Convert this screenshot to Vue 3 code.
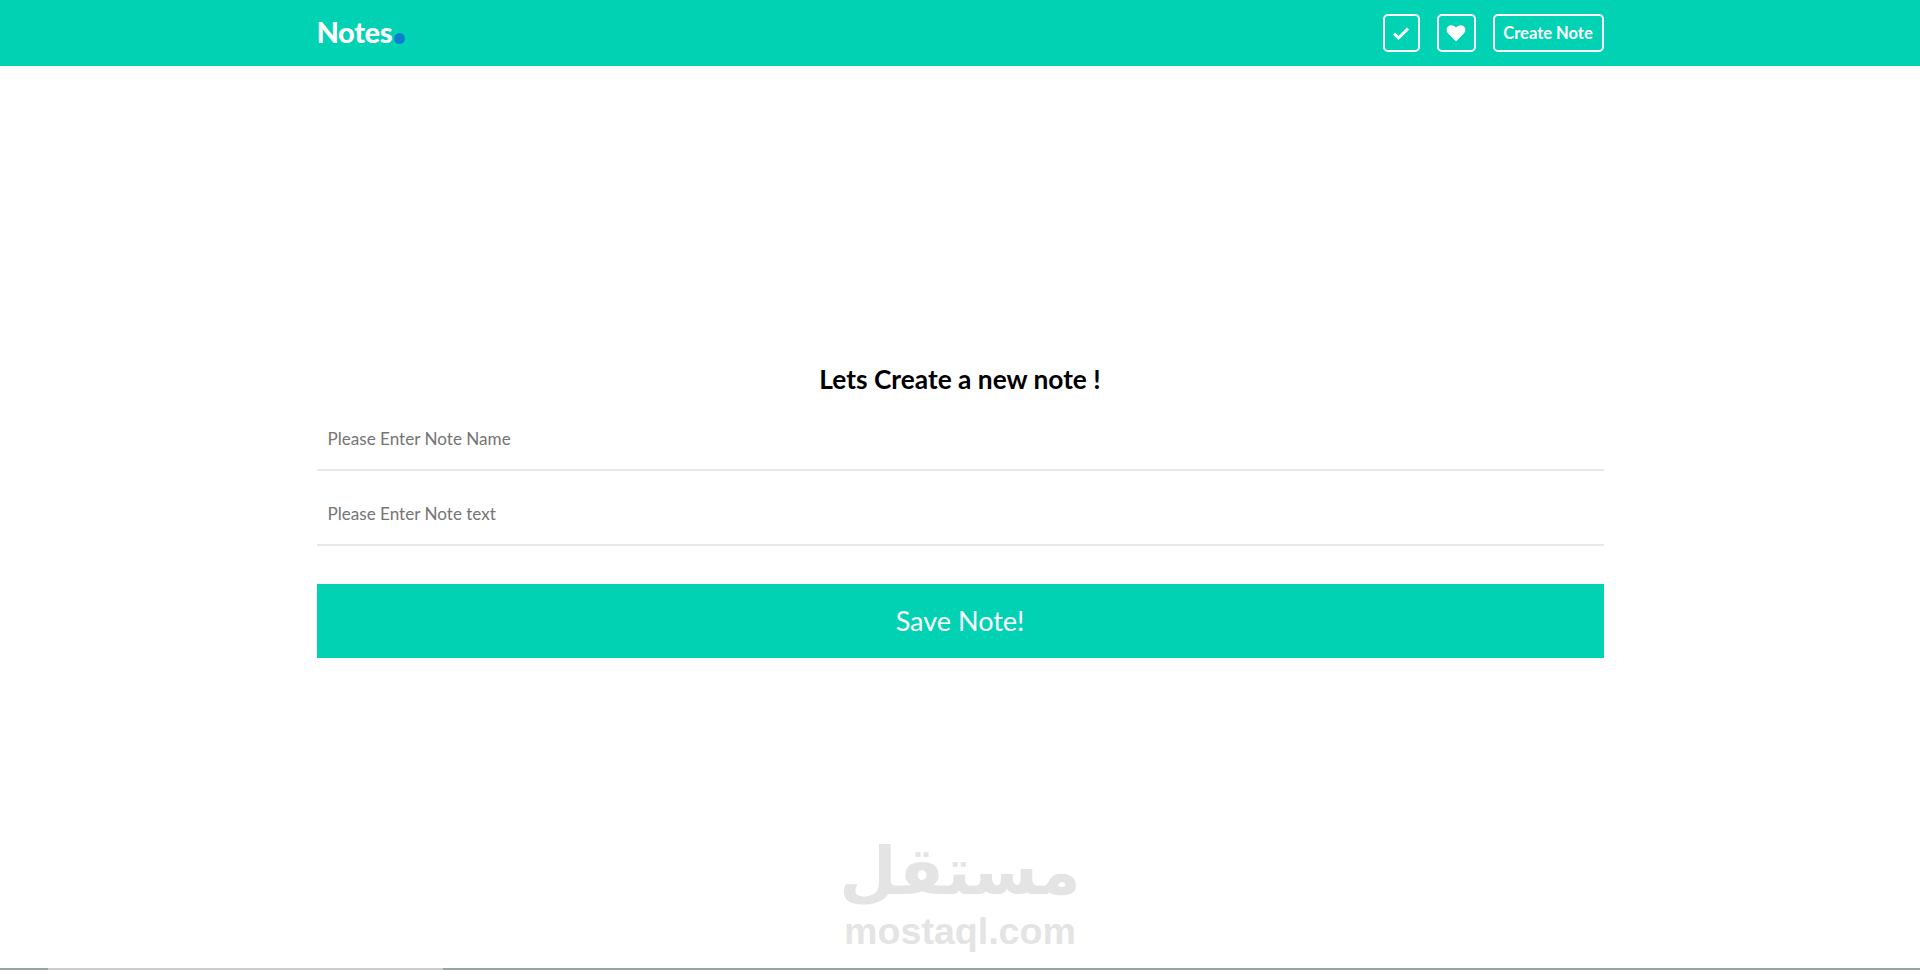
<script setup>
const title = 'Notes'
</script>

<template>
  <div class="page">
    <header class="bar">
      <div class="wrap bar-in">
        <div class="logo">{{ title }}<span class="dot"></span></div>
        <nav class="nav">
          <a class="btn icon check">
            <svg width="18" height="16" viewBox="0 0 18 16"><path d="M2 8.5 6.5 13 16 3.5" fill="none" stroke="#fff" stroke-width="3"/></svg>
          </a>
          <a class="btn icon heart">
            <svg width="20" height="18" viewBox="0 0 20 18"><path d="M10 17.5 2.2 9.6C0 7.2 .2 3.6 2.6 2 4.8.5 7.8 1 10 3.4 12.2 1 15.2.5 17.4 2c2.4 1.6 2.6 5.2.4 7.6Z" fill="#fff"/></svg>
          </a>
          <a class="btn create">Create Note</a>
        </nav>
      </div>
    </header>
    <main class="wrap form">
      <h1 class="heading">Lets Create a new note !</h1>
      <input class="field" placeholder="Please Enter Note Name" />
      <input class="field second" placeholder="Please Enter Note text" />
      <button class="save">Save Note!</button>
    </main>
    <div class="mark">
      <div class="mark-ar" lang="ar" dir="rtl">مستقل</div>
      <div class="mark-en">mostaql.com</div>
    </div>
    <div class="edge"></div>
  </div>
</template>

<style scoped>
.page { position: relative; height: 970px; overflow: hidden; background: #fff; font-family: "Lato", "Open Sans", sans-serif; }
.wrap { width: 1287px; margin: 0 auto; }
.bar { height: 66px; background: #01d2b4; }
.bar-in { height: 100%; display: flex; align-items: center; justify-content: space-between; }
.logo { display: flex; align-items: baseline; margin-top: -3px; color: #fff; font-size: 29px; font-weight: 900; letter-spacing: -0.4px; }
.dot { width: 11px; height: 11px; margin-left: 2px; border-radius: 50%; background: #0a7fd0; transform: translateY(1px); }
.nav { display: flex; gap: 17px; }
.btn { box-sizing: border-box; height: 38px; display: flex; align-items: center; justify-content: center; border: 2px solid #fff; border-radius: 5px; color: #fff; font-size: 16.5px; font-weight: 700; }
.check { width: 37px; }
.heart { width: 39px; }
.create { width: 111px; padding-bottom: 1px; }
.form { display: flex; flex-direction: column; }
.heading { margin: 296px 0 0; height: 34px; text-align: center; font-size: 26.3px; line-height: 34px; font-weight: 700; color: #000; }
.field { box-sizing: border-box; height: 75px; padding: 12px 11px 0; border: 0; border-bottom: 2px solid #e8e8e8; outline: 0; font: 17.1px "Lato", sans-serif; }
.field::placeholder { color: #757575; }
.save { margin-top: 38px; height: 74px; padding-bottom: 2px; border: 0; background: #01d2b4; color: #fff; font: 27px "Lato", sans-serif; }
.mark { position: absolute; left: 820px; top: 833px; width: 280px; text-align: center; color: #e4e4e4; }
.mark-ar { height: 78px; font: 700 66px/78px "DejaVu Sans", sans-serif; }
.mark-en { font: 700 37.6px/40px "Liberation Sans", sans-serif; }
.edge { position: absolute; left: 0; right: 0; bottom: 0; height: 2px; background: linear-gradient(to right, #9aa3a3 0 48px, #cccccc 48px 443px, #9aa3a3 443px); }
</style>

<style>
html, body { margin: 0; }
</style>
